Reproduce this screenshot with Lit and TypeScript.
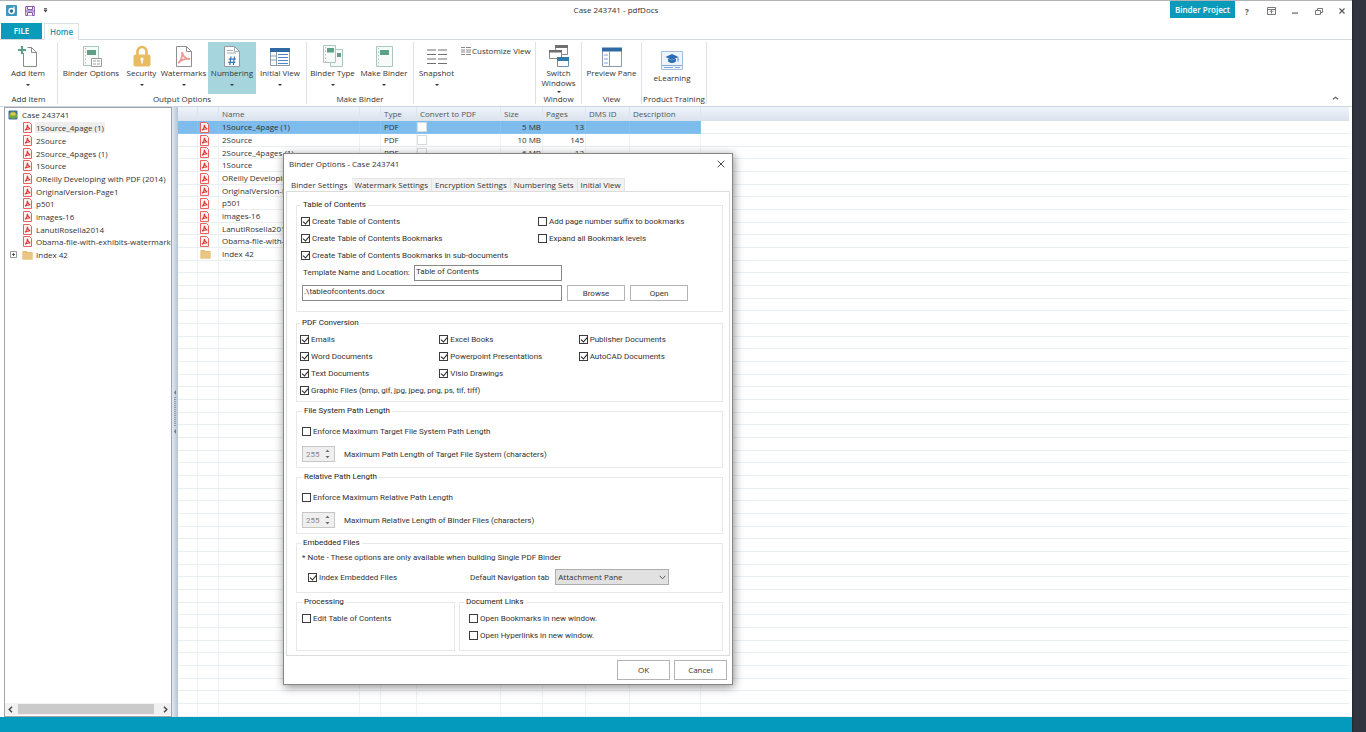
import { LitElement, html, css, svg, nothing } from 'lit';
import { customElement, state } from 'lit/decorators.js';
import { classMap } from 'lit/directives/class-map.js';

const base = css`
  * { box-sizing: border-box; }
  button, input, select { font: inherit; color: inherit; margin: 0; }
  button { border: 0; padding: 0; background: none; }
  svg { display: block; flex: none; }
`;

const pdfIcon = html`<svg width="9" height="11" viewBox="0 0 9 11" fill="none">
  <path d="M.5.5h6l2 2v8h-8z" fill="#fff4f3" stroke="#e8615c"/>
  <path d="M2 8.200c1.600-1 2.400-3.200 2.400-5.400.2 2.200 1.200 3.700 2.900 4.200-1.800-.2-3.600.2-5.300 1.200z" stroke="#d93a36" stroke-width="1.100"/>
</svg>`;

const folderIcon = html`<svg width="11" height="10" viewBox="0 0 11 10">
  <path d="M.5 1h4l1 1h5v7.500H.5z" fill="#e5bf78"/><path d="M.5 3h10v6.500H.5z" fill="#eac684"/>
</svg>`;

const caseIcon = html`<svg width="10" height="10" viewBox="0 0 10 10">
  <rect x=".5" y=".5" width="9" height="9" rx="1" fill="#3f6f9c"/>
  <path d="M1 4.500 5 1l4 3.500v3L5 9 1 7.500z" fill="#6aa84a"/><path d="M2.500 2.500h5v3h-5z" fill="#e6c945"/>
</svg>`;

const icons: Record<string, unknown> = {
  add: svg`<path d="M6.500 8v13.500h13v-14l-5-5h-4" fill="#fff" stroke="#8a8a8a"/><path d="M14.500 2.500v5h5" stroke="#8a8a8a"/><path d="M5 1v8M1 5h8" stroke="#5f9f86" stroke-width="2.200"/>`,
  options: svg`<path d="M3.500 1.500h15v19h-15z" fill="#f6fbf9" stroke="#a9c9bc"/><path d="M5.500 3v17" stroke="#a9c9bc" stroke-dasharray="1.500 2"/><path d="M7 5h9v5H7z" fill="#5f9f86"/><path d="M11.500 13.500h10v8h-10z" fill="#fff" stroke="#9a9a9a"/><path d="M13 16h3m1 0h3m-7 3h3m1 0h3" stroke="#9a9a9a"/>`,
  security: svg`<path d="M6.500 11V7a4.500 5 0 0 1 9 0v4" stroke="#e6b95c" stroke-width="2.600"/><rect x="2.500" y="9.500" width="17" height="12" rx="2" fill="#e9bc62"/><circle cx="11" cy="14" r="1.600" fill="#fff"/><path d="M11 14v4.500" stroke="#fff" stroke-width="1.600"/>`,
  watermark: svg`<path d="M3.500 1.500h10l5 5v15h-15z" fill="#fff" stroke="#8f8f8f"/><path d="M13.500 1.500v5h5" stroke="#8f8f8f"/><path d="M5 18c3-2 5-7 4-11 1 4 4 7 8 7-5-.5-9 1-12 4z" stroke="#eb9c92" stroke-width="1.800"/>`,
  numbering: svg`<path d="M3.500 1.500h10l5 5v15h-15z" fill="#fbfcfd" stroke="#8f9ba0"/><path d="M13.500 1.500v5h5M6 5.500h6M6 8h9" stroke="#a3adb1"/><path d="M10 11.500 8.800 20m4.700-8.500L12.300 20M7.800 14.200h7M7.300 17.300h7" stroke="#3b76b4" stroke-width="1.200"/>`,
  initial: svg`<path d="M1.500 3.500h19v17h-19z" fill="#fff" stroke="#8b9bab"/><path d="M1 3h20v4H1z" fill="#2f6aa5"/><path d="M7.500 7v13M1.500 11h6m-6 4h6" stroke="#8b9bab"/><path d="M9 9.500h10M9 12.500h10m-10 3h10m-10 3h10" stroke="#4c86c6"/>`,
  type: svg`<path d="M8.500 4.500h12v17h-12z" fill="#f6fbf9" stroke="#a9c9bc"/><path d="M15 8h4v4h-4z" fill="#5f9f86"/><path d="M1.500.5h12v17h-12z" fill="#f6fbf9" stroke="#a9c9bc"/><path d="M3.500 2v15" stroke="#a9c9bc" stroke-dasharray="1.500 2"/><path d="M5 3h7v4.500H5z" fill="#5f9f86"/>`,
  make: svg`<path d="M3.500 1.500h16v20h-16z" fill="#f6fbf9" stroke="#a9c9bc"/><path d="M5.500 3v18" stroke="#a9c9bc" stroke-dasharray="1.500 2"/><path d="M7 5h9v5H7z" fill="#5f9f86"/>`,
  snapshot: svg`<path d="M1 5h9m2 0h9M1 9.500h9m2 0h9M1 14h9m2 0h9M1 18.500h9m2 0h9" stroke="#707070" stroke-width="1.200"/>`,
  windows: svg`<path d="M7.500 1.500h12v8h-12z" fill="#fff" stroke="#8a8a8a"/><path d="M7 0h13v3H7z" fill="#6f6f6f"/><path d="M1.500 5.500h12v8h-12z" fill="#fff" stroke="#8a8a8a"/><path d="M1 5h13v2.500H1z" fill="#6f6f6f"/><path d="M9.500 13.500h11v8h-11z" fill="#fff" stroke="#6b93b8"/><path d="M9 12h12v4H9z" fill="#2f7bae"/>`,
  preview: svg`<path d="M1.500 3.500h19v18h-19z" fill="#fff" stroke="#8b9bab"/><path d="M1 2.500h20v4H1z" fill="#2f6aa5"/><path d="M8.500 6v15" stroke="#8b9bab"/><path d="M3 10h4m-4 4h4m-4 4h4" stroke="#7aa4d2"/>`,
  learning: svg`<path d="M.5 1.500h21v18H.5z" fill="#eef4fb" stroke="#a4bfe0"/><path d="M11 4 4.500 7 11 10l6.500-3z" fill="#2b6cb3"/><path d="M7.500 9v2.500q3.500 2.500 7 0V9L11 10.500zM17 7.500v4" fill="#2b6cb3" stroke="#2b6cb3" stroke-width=".8"/><path d="M1 15.500h20M3 17.500h9m2 0h5" stroke="#86a9d6"/>`,
};

type Tool = { label: string; icon: string; width: number; menu?: boolean; active?: boolean; low?: boolean };
type Group = { name: string; width: number; tools: Tool[]; custom?: boolean };

const groups: Group[] = [
  { name: 'Add Item', width: 58, tools: [{ label: 'Add Item', icon: 'add', width: 56, menu: true }] },
  { name: 'Output Options', width: 249, tools: [
    { label: 'Binder Options', icon: 'options', width: 66 },
    { label: 'Security', icon: 'security', width: 35, menu: true },
    { label: 'Watermarks', icon: 'watermark', width: 49, menu: true },
    { label: 'Numbering', icon: 'numbering', width: 48, menu: true, active: true },
    { label: 'Initial View', icon: 'initial', width: 48, menu: true } ] },
  { name: 'Make Binder', width: 107, tools: [
    { label: 'Binder Type', icon: 'type', width: 51, menu: true },
    { label: 'Make Binder', icon: 'make', width: 52, menu: true } ] },
  { name: '', width: 122, custom: true, tools: [{ label: 'Snapshot', icon: 'snapshot', width: 45, menu: true }] },
  { name: 'Window', width: 46, tools: [{ label: 'Switch Windows', icon: 'windows', width: 45, menu: true }] },
  { name: 'View', width: 60, tools: [{ label: 'Preview Pane', icon: 'preview', width: 59 }] },
  { name: 'Product Training', width: 65, tools: [{ label: 'eLearning', icon: 'learning', width: 60, low: true }] },
];

const files = ['1Source_4page (1)', '2Source', '2Source_4pages (1)', '1Source', 'OReilly Developing with PDF (2014)',
  'OriginalVersion-Page1', 'p501', 'images-16', 'LanutiRosella2014', 'Obama-file-with-exhibits-watermarked'];

@customElement('ribbon-bar')
class RibbonBar extends LitElement {
  static styles = [base, css`
    :host { display: block; }
    .title { display: flex; height: 22px; }
    .quick { display: flex; align-items: center; gap: 8px; width: 62px; padding: 0 0 3px 6px; }
    .name { flex: 1; margin: 0; font-size: 8px; font-weight: 400; line-height: 18px; text-align: center; }
    .project { width: 65px; height: 17px; background: #0a9bbb; color: #fff; font-weight: 600; }
    .sys { width: 24px; height: 20px; display: grid; place-items: center; font-weight: 700; color: #555; }
    .sys:last-child { width: 21px; }
    .tabs { display: flex; height: 17px; padding-left: 1px; border-bottom: 1px solid #d5dade; }
    .tab { height: 16px; padding-bottom: 1px; color: #1593b5; font-weight: 600; }
    .file { width: 41px; background: #0a9bbb; color: #fff; }
    .home { width: 35px; height: 17px; margin-left: 2px; background: #fff; border: 1px solid #dde2e6; border-bottom: 0; }
    .ribbon { display: flex; height: 67px; border-bottom: 1px solid #ccd5df; position: relative; }
    .group { display: flex; flex-direction: column; margin: 2px 0; border-right: 1px solid #dfe3e7; }
    .tools { display: flex; height: 52px; }
    .group-name { line-height: 10px; text-align: center; white-space: nowrap; }
    .tool { display: flex; flex-direction: column; align-items: center; padding-top: 3px; line-height: 10px; }
    .tool.low { padding-top: 8px; }
    .tool.active { background: #a6d5dd; }
    .text { margin-top: 1px; }
    .caret { width: 0; height: 0; margin-top: 6px; border: 2px solid transparent; border-top-color: #333; border-bottom: 0; }
    .two .caret { margin-top: 3px; }
    .custom { display: flex; align-items: center; align-self: flex-start; gap: 1px; margin: 4px 0 0 2px; line-height: 10px; white-space: nowrap; }
    .collapse { position: absolute; right: 13px; bottom: 6px; }
  `];

  render() {
    return html`
      <header class="title">
        <div class="quick">
          <svg width="11" height="11" viewBox="0 0 11 11"><rect width="11" height="11" rx="1" fill="#3f97bb"/><circle cx="5.500" cy="6" r="2.500" fill="#2c7397" stroke="#fff" stroke-width="1.400"/><path d="M8 1.500V7" stroke="#fff" stroke-width="1.200"/></svg>
          <svg width="10" height="10" viewBox="0 0 10 10" fill="none"><path d="M.7.5h8.600v9H.7z" fill="#f5effa" stroke="#8759a8"/><path d="M2.500.5h5v3h-5zM2.500 9.500v-3h5v3" fill="#fff" stroke="#8759a8"/><path d="M0 5h10" stroke="#8759a8"/></svg>
          <svg width="5" height="5" viewBox="0 0 5 5"><path d="M1 .3h3v1H1zM.5 1.800h4L2.500 4.500z" fill="#444"/></svg>
        </div>
        <h1 class="name">Case 243741 - pdfDocs</h1>
        <button class="project">Binder Project</button>
        <button class="sys" aria-label="Help">?</button>
        <button class="sys" aria-label="Ribbon display"><svg width="9" height="8" viewBox="0 0 9 8" fill="none" stroke="#777"><path d="M.5.5h8v7h-8zM.5 2.500h8M4.500 6.500v-3M3 4.800l1.500-1.500L6 4.800"/></svg></button>
        <button class="sys" aria-label="Minimize"><svg width="6" height="8" viewBox="0 0 6 8"><path d="M0 5.500h6v1.200H0z" fill="#666"/></svg></button>
        <button class="sys" aria-label="Restore"><svg width="8" height="7" viewBox="0 0 8 7" fill="none" stroke="#777"><path d="M2.500 2V.5h5v4H6M.5 2.500h5v4h-5z"/></svg></button>
        <button class="sys" aria-label="Close"><svg width="6" height="6" viewBox="0 0 6 6" stroke="#555" stroke-width="1.100"><path d="m.5.5 5 5m0-5-5 5"/></svg></button>
      </header>
      <nav class="tabs"><button class="tab file">FILE</button><button class="tab home">Home</button></nav>
      <div class="ribbon">
        ${groups.map(g => html`<section class="group" style="width:${g.width}px">
          <div class="tools">
            ${g.tools.map(t => html`<button style="width:${t.width}px"
              class=${classMap({ tool: true, active: !!t.active, low: !!t.low, two: t.icon === 'windows' })}>
              <svg width="22" height="22" viewBox="0 0 22 22" fill="none">${icons[t.icon]}</svg>
              <span class="text">${t.label}</span>${t.menu ? html`<span class="caret"></span>` : nothing}
            </button>`)}
            ${g.custom ? html`<button class="custom">
              <svg width="10" height="8" viewBox="0 0 10 8"><path d="M0 .5h4m1 0h5M0 3h4m1 0h5M0 5h4m1 0h5M0 7.500h4m1 0h5" stroke="#888"/></svg>Customize View</button>` : nothing}
          </div>
          <div class="group-name">${g.name}</div>
        </section>`)}
        <button class="collapse" aria-label="Collapse ribbon"><svg width="7" height="4" viewBox="0 0 7 4" fill="none"><path d="m.8 3.300 2.700-2 2.700 2" stroke="#666" stroke-width="1.200"/></svg></button>
      </div>`;
  }
}

@customElement('file-tree')
class FileTree extends LitElement {
  static styles = [base, css`
    :host { display: flex; flex-direction: column; min-width: 0; padding: 0 0 1px; border: 1px solid #a0a4a8; background: #fff; }
    .tree { flex: 1; min-height: 0; overflow: hidden; margin: 0; padding: 0; list-style: none; white-space: nowrap; }
    .root { display: flex; align-items: center; gap: 4px; height: 13px; padding-left: 3px; }
    .node { display: flex; align-items: center; height: 13px; }
    .node:nth-child(3n + 1) { height: 12px; }
    .twist { width: 17px; padding-left: 5px; flex: none; }
    .name { margin-left: 2px; padding: 0 1px; line-height: 11px; }
    .sel .name { background: #eee; }
    .twist + svg { width: 11px; }
    .scroll { display: flex; align-items: center; justify-content: space-between; height: 12px; background: #f1f1f1; }
    .thumb { flex: 1; align-self: stretch; margin: 1px 6px 1px 2px; background: #cacaca; }
    .scroll svg { margin: 0 3px; }
  `];
  render() {
    return html`<ul class="tree">
      <li class="root">${caseIcon}Case 243741</li>
      ${files.map((f, i) => html`<li class="node ${i === 0 ? 'sel' : ''}"><span class="twist"></span>${pdfIcon}<span class="name">${f}</span></li>`)}
      <li class="node"><span class="twist"><svg width="7" height="7" viewBox="0 0 7 7" fill="none"><path d="M.5.5h6v6h-6z" stroke="#999"/><path d="M2 3.500h3M3.500 2v3" stroke="#456"/></svg></span>${folderIcon}<span class="name">Index 42</span></li>
    </ul>
    <div class="scroll">
      <svg width="5" height="7" viewBox="0 0 5 7" fill="none" stroke="#444" stroke-width="1.400"><path d="M4 .8 1.200 3.500 4 6.200"/></svg>
      <div class="thumb"></div>
      <svg width="5" height="7" viewBox="0 0 5 7" fill="none" stroke="#444" stroke-width="1.400"><path d="m1 .8 2.800 2.700L1 6.200"/></svg>
    </div>`;
  }
}

@customElement('file-grid')
class FileGrid extends LitElement {
  static styles = [base, css`
    :host { display: block; min-width: 0; overflow: hidden; }
    .grid { width: 100%; table-layout: fixed; border-collapse: separate; border-spacing: 0; white-space: nowrap; }
    .grid th { height: 14px; padding: 0 3px; font-weight: 400; text-align: left; color: #51565c; line-height: 11px;
      background: linear-gradient(#eff4f9, #dbe3ed); border-right: 1px solid #dde5ee; border-bottom: 1px solid #d8e0e9; }
    .grid td { height: 13px; padding: 0 1px 0 3px; line-height: 10px; border-right: 1px solid #f0f3f6; border-bottom: 1px solid #e9eef2; overflow: hidden; }
    .grid tr:nth-child(3n) td { height: 12px; }
    .grid .sel td:not(:last-child) { background: #7dbcec; border-color: #88c3ee; }
    .grid th:last-child, .grid td:last-child { border-right: 0; }
    .c1 { width: 20px; } .c2 { width: 21px; } .c3 { width: 141px; } .c4 { width: 21px; } .c5 { width: 36px; }
    .c6 { width: 84px; } .c7 { width: 42px; } .c8 { width: 43px; } .c9 { width: 44px; } .c10 { width: 71px; }
    .grid .num { text-align: right; }
    .grid .box { padding: 0; }
    .grid .ico { padding-left: 2px; }
    .box input { display: block; appearance: none; width: 10px; height: 10px; background: #fff; border: 1px solid #d5dbe1; }
  `];
  private details: Record<number, [string, string]> = { 0: ['5 MB', '13'], 1: ['10 MB', '145'], 2: ['6 MB', '13'] };
  render() {
    const rows = [...files, 'Index 42'];
    return html`<table class="grid">
      <colgroup>${[1, 2, 3, 4, 5, 6, 7, 8, 9, 10].map(n => html`<col class="c${n}">`)}<col></colgroup>
      <thead><tr><th></th><th></th><th>Name</th><th></th><th>Type</th><th>Convert to PDF</th><th>Size</th><th>Pages</th><th>DMS ID</th><th>Description</th><th></th></tr></thead>
      <tbody>
        ${rows.map((r, i) => {
          const d = this.details[i];
          return html`<tr class=${i === 0 ? 'sel' : ''}><td></td><td class="ico">${r === 'Index 42' ? folderIcon : pdfIcon}</td><td>${r}</td><td></td>
            <td>${d ? 'PDF' : ''}</td><td class="box">${d ? html`<input type="checkbox" aria-label="Convert ${r}">` : nothing}</td>
            <td class="num">${d?.[0]}</td><td class="num">${d?.[1]}</td><td></td><td></td><td></td></tr>`;
        })}
        ${Array.from({ length: 37 }, () => html`<tr><td></td><td></td><td></td><td></td><td></td><td></td><td></td><td></td><td></td><td></td><td></td></tr>`)}
      </tbody></table>`;
  }
}

@customElement('binder-options')
class BinderOptions extends LitElement {
  static styles = [base, css`
    :host { display: block; background: #fff; border: 1px solid #868686; box-shadow: 1px 2px 9px rgba(0, 0, 0, .45); }
    .head { display: flex; align-items: center; justify-content: space-between; height: 24px; padding: 0 7px 5px 5px; }
    .caption { margin: 0; font-size: 8px; font-weight: 400; }
    .tabs { display: flex; height: 13px; padding-left: 4px; }
    .tab { padding: 0 3px; background: #f2f2f2; border: 1px solid #e4e4e4; border-bottom: 0; border-left: 0; line-height: 10px; }
    .tab.on { background: #fff; border-color: #fff; }
    .panel { margin: 0 2px; padding: 7px 6px 4px 9px; border: 1px solid #dcdcdc; display: grid; gap: 3px; font-family: Roboto, "Open Sans", sans-serif; }
    .set { min-width: 0; margin: 0; padding: 0 4px 2px; border: 1px solid #e8e8e8; }
    .set.toc { margin-bottom: 2px; padding: 2px 4px 10px; }
    .set.conv { padding: 2px 4px 2px 3px; }
    .legend { padding: 0 2px; line-height: 12px; color: #222; }
    .cols { display: grid; grid-template-columns: 237px 1fr; }
    .thirds { display: grid; grid-template-columns: repeat(3, 1fr); }
    .thirds .wide { grid-column: 1 / -1; }
    .check { display: flex; align-items: center; gap: 2px; height: 17px; white-space: nowrap; }
    .check input { appearance: none; display: block; position: relative; flex: none; width: 9px; height: 9px; border: 1px solid #3c3c3c; background: #fff; }
    .check input:checked::after { content: ""; position: absolute; left: 2px; top: 0; width: 3px; height: 5px; border: solid #222; border-width: 0 1px 1px 0; transform: rotate(40deg); }
    .field { display: flex; align-items: center; height: 17px; width: 261px; padding-left: 2px; margin-bottom: 4px; }
    .field label { width: 111px; }
    .box { height: 16px; min-width: 0; flex: 1; padding: 0 1px 3px; border: 1px solid #888; border-radius: 0; background: #fff; line-height: 10px; }
    .path { display: flex; gap: 5px; padding-left: 1px; }
    .path .box { flex: 0 0 260px; }
    .btn { width: 58px; height: 16px; border: 1px solid #b4b4b4; background: #fff; }
    .len { padding: 6px 5px 5px; }
    .limit { display: flex; align-items: center; gap: 9px; margin-top: 6px; }
    .spin { display: flex; align-items: center; width: 33px; height: 16px; background: #efefef; border: 1px solid #c6c6c6; color: #8a8a8a; padding-right: 4px; }
    .spin input { appearance: textfield; width: 22px; height: 14px; padding: 0 3px; border: 0; background: none; }
    .note { margin: 0; padding: 4px 1px 0; line-height: 10px; }
    .nav { display: flex; align-items: center; height: 16px; margin: 6px 0 5px 7px; }
    .nav .check { width: 162px; }
    .nav .sel { display: flex; align-items: center; width: 114px; margin-left: 6px; position: relative; }
    .sel select { appearance: none; width: 100%; height: 16px; padding: 0 2px 1px; border: 1px solid #adadad; border-radius: 0; background: #e1e1e1; font-family: "Open Sans", sans-serif; }
    .sel svg { position: absolute; right: 3px; pointer-events: none; }
    .pair { display: grid; grid-template-columns: 159px 1fr; gap: 4px; }
    .pair .set { padding: 2px 5px 6px; }
    .pair .links { padding-left: 9px; }
    .links .legend { margin-left: -5px; }
    .foot { display: flex; justify-content: flex-end; gap: 4px; padding: 4px 5px; }
    .foot .btn { width: 53px; height: 20px; padding-bottom: 2px; }
  `];
  @state() private tab = 0;

  private check(id: string, label: string, on = false, cls = '') {
    return html`<label class="check ${cls}" for=${id}><input id=${id} type="checkbox" ?checked=${on}>${label}</label>`;
  }
  private limit(id: string, label: string) {
    return html`<div class="limit"><div class="spin"><input id=${id} type="text" inputmode="numeric" value="255" disabled>
      <svg width="5" height="10" viewBox="0 0 5 10"><path d="M.5 3 2.500.8 4.500 3zM.5 7l2 2.200 2-2.200z" fill="#666"/></svg></div>
      <label for=${id}>${label}</label></div>`;
  }
  render() {
    const tabs = ['Binder Settings', 'Watermark Settings', 'Encryption Settings', 'Numbering Sets', 'Initial View'];
    return html`
      <div class="head"><h2 class="caption">Binder Options - Case 243741</h2>
        <button aria-label="Close"><svg width="8" height="8" viewBox="0 0 8 8" stroke="#444"><path d="m.7.7 6.600 6.600m0-6.600L.7 7.300"/></svg></button></div>
      <div class="tabs" role="tablist">${tabs.map((t, i) => html`<button role="tab" aria-selected=${i === this.tab} class="tab ${i === this.tab ? 'on' : ''}" @click=${() => (this.tab = i)}>${t}</button>`)}</div>
      <div class="panel">
        <fieldset class="set toc"><legend class="legend">Table of Contents</legend>
          <div class="cols">
            ${this.check('toc', 'Create Table of Contents', true)}${this.check('suffix', 'Add page number suffix to bookmarks')}
            ${this.check('marks', 'Create Table of Contents Bookmarks', true)}${this.check('expand', 'Expand all Bookmark levels')}
            ${this.check('sub', 'Create Table of Contents Bookmarks in sub-documents', true)}
          </div>
          <div class="field"><label for="tpl">Template Name and Location:</label><input class="box" id="tpl" value="Table of Contents"></div>
          <div class="path"><input class="box" aria-label="Template path" value=".\\tableofcontents.docx"><button class="btn">Browse</button><button class="btn">Open</button></div>
        </fieldset>
        <fieldset class="set conv"><legend class="legend">PDF Conversion</legend>
          <div class="thirds">
            ${this.check('em', 'Emails', true)}${this.check('xl', 'Excel Books', true)}${this.check('pub', 'Publisher Documents', true)}
            ${this.check('wd', 'Word Documents', true)}${this.check('pp', 'Powerpoint Presentations', true)}${this.check('cad', 'AutoCAD Documents', true)}
            ${this.check('tx', 'Text Documents', true)}${this.check('vis', 'Visio Drawings', true)}
            ${this.check('gr', 'Graphic Files (bmp, gif, jpg, jpeg, png, ps, tif, tiff)', true, 'wide')}
          </div>
        </fieldset>
        <fieldset class="set len"><legend class="legend">File System Path Length</legend>
          ${this.check('fs', 'Enforce Maximum Target File System Path Length')}${this.limit('fsn', 'Maximum Path Length of Target File System (characters)')}
        </fieldset>
        <fieldset class="set len"><legend class="legend">Relative Path Length</legend>
          ${this.check('rel', 'Enforce Maximum Relative Path Length')}${this.limit('reln', 'Maximum Relative Length of Binder Files (characters)')}
        </fieldset>
        <fieldset class="set"><legend class="legend">Embedded Files</legend>
          <p class="note">* Note - These options are only available when building Single PDF Binder</p>
          <div class="nav">${this.check('idx', 'Index Embedded Files', true)}<label for="tabsel">Default Navigation tab</label>
            <div class="sel"><select id="tabsel"><option>Attachment Pane</option></select>
              <svg width="7" height="5" viewBox="0 0 7 5" fill="none"><path d="m.7.8 2.800 3 2.800-3" stroke="#555"/></svg></div></div>
        </fieldset>
        <div class="pair">
          <fieldset class="set"><legend class="legend">Processing</legend>${this.check('edit', 'Edit Table of Contents')}</fieldset>
          <fieldset class="set links"><legend class="legend">Document Links</legend>
            ${this.check('ob', 'Open Bookmarks in new window.')}${this.check('oh', 'Open Hyperlinks in new window.')}</fieldset>
        </div>
      </div>
      <div class="foot"><button class="btn">OK</button><button class="btn">Cancel</button></div>`;
  }
}

@customElement('app-root')
class AppRoot extends LitElement {
  static styles = [base, css`
    :host { display: flex; height: 100vh; background: #31353f; color: #333; font: 8px "Open Sans", "Noto Sans", sans-serif; overflow: hidden; }
    .window { flex: 1; min-width: 0; margin-right: 14px; display: flex; flex-direction: column; position: relative;
      background: #fff; border-top: 1px solid #b3b3b3; box-shadow: 0 0 2px #111; }
    .body { flex: 1; min-height: 0; display: grid; grid-template-columns: 168px 6px minmax(0, 1fr); padding: 0 3px 0 4px; }
    .split { display: grid; place-items: center; background: linear-gradient(90deg, #e4e9ef, #b4c4d4); }
    .status { height: 15px; background: #049abd; }
    .dialog { position: absolute; left: 283px; top: 152px; width: 450px; }
  `];
  render() {
    return html`<main class="window">
      <ribbon-bar></ribbon-bar>
      <div class="body">
        <file-tree></file-tree>
        <div class="split"><svg width="4" height="48" viewBox="0 0 4 48"><path d="M1 4.500 3 2v5zM1 43.500 3 41v5z" fill="#6d7b8a"/><path d="M2 9v30" stroke="#8d9aa8" stroke-width="2" stroke-dasharray="1 1"/></svg></div>
        <file-grid></file-grid>
      </div>
      <footer class="status"></footer>
      <binder-options class="dialog" role="dialog"></binder-options>
    </main>`;
  }
}
